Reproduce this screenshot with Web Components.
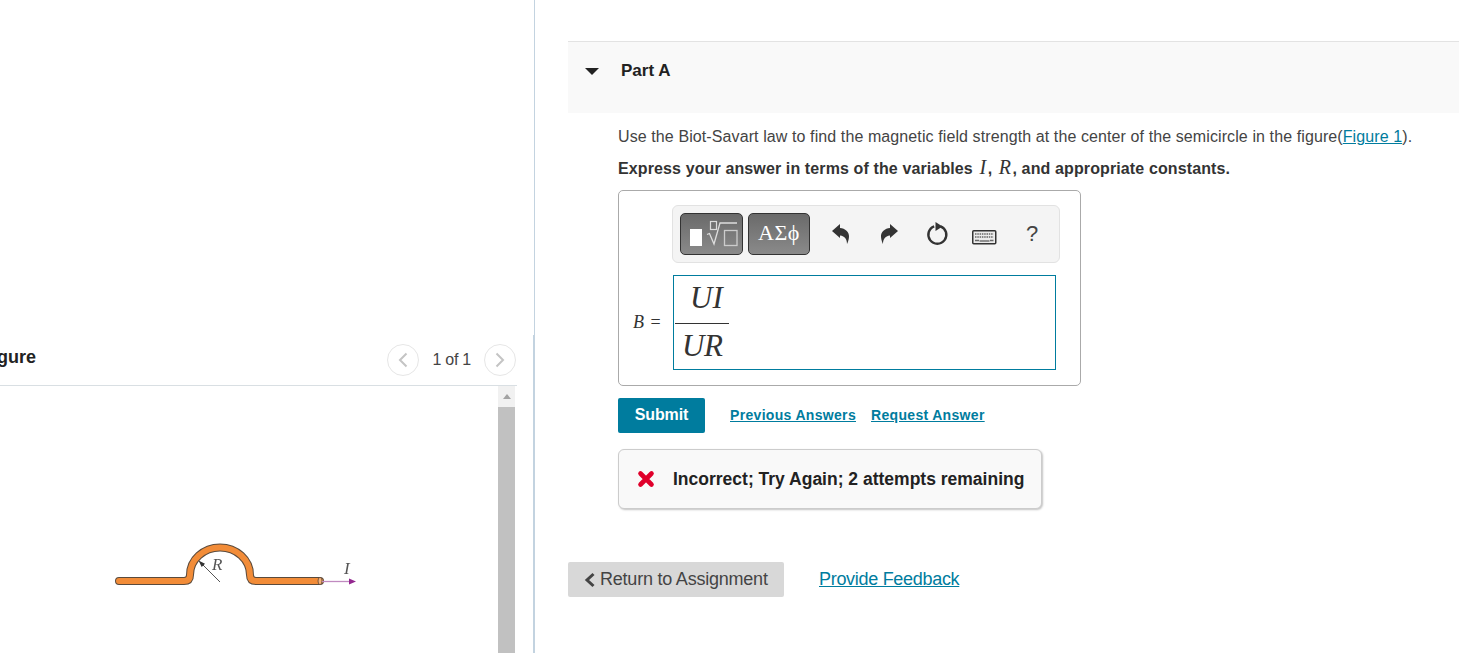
<!DOCTYPE html>
<html lang="en">
<head>
<meta charset="utf-8">
<title>Part A</title>
<style>
  html, body { margin: 0; padding: 0; height: 100%; background: #fff; overflow: hidden; }
  body { font-family: "Liberation Sans", Arial, sans-serif; color: #333; }
</style>
</head>
<body>
<item-page>
  <figure-pane slot="left"></figure-pane>
  <part-pane slot="right"></part-pane>
</item-page>

<script>
class ItemPage extends HTMLElement {
  constructor() {
    super();
    this.attachShadow({ mode: 'open' }).innerHTML = `
      <style>
        :host { display: flex; width: 1459px; height: 653px; overflow: hidden; }
        .left { flex: 0 0 534px; width: 534px; height: 653px; border-right: 1px solid #c3d3e0; overflow: hidden;
          background: linear-gradient(#c3d3e0, #c3d3e0) right bottom / 1px 318px no-repeat; }
        .right { flex: 1; min-width: 0; padding-left: 33px; }
      </style>
      <div class="left"><slot name="left"></slot></div>
      <div class="right"><slot name="right"></slot></div>
    `;
  }
}

class FigurePane extends HTMLElement {
  constructor() {
    super();
    this.attachShadow({ mode: 'open' }).innerHTML = `
      <style>
        :host { display: block; width: 517px; padding-top: 344px; }
        .head { display: flex; align-items: flex-start; height: 41px; border-bottom: 1px solid #d9dfe3; overflow: hidden; }
        h2 { margin: 0 0 0 -19px; font: bold 18px/26px "Liberation Sans", sans-serif; color: #222; flex: 1; }
        .pager { display: flex; align-items: center; gap: 13px; color: #444; font-size: 16px; margin-right: 1px; }
        .nav { width: 32px; height: 32px; box-sizing: border-box; border: 1px solid #e6e6e6; border-radius: 50%; display: flex; align-items: center; justify-content: center; }
        .pager span { letter-spacing: -.25px; }
        .body { display: flex; height: 267px; }
        .canvas { flex: 1; padding-top: 156px; padding-left: 113px; box-sizing: border-box; }
        .bar { width: 17px; margin-right: 2px; background: #f1f1f1; display: flex; flex-direction: column; }
        .arrow { height: 21px; display: flex; align-items: center; justify-content: center; }
        .arrow i { border: 4.5px solid transparent; border-top: 0; border-bottom: 5px solid #a3a3a3; }
        .thumb { flex: 1; background: #c1c1c1; }
        svg { display: block; }
        .wire { filter: blur(.3px); }
      </style>
      <div class="head">
        <h2>Figure</h2>
        <div class="pager">
          <div class="nav"><svg width="12" height="18" viewBox="0 0 12 18"><path d="M9.500 2.500 3 9l6.500 6.500" fill="none" stroke="#c4c4c4" stroke-width="2"/></svg></div>
          <span>1 of 1</span>
          <div class="nav"><svg width="12" height="18" viewBox="0 0 12 18"><path d="M2.500 2.500 9 9l-6.500 6.500" fill="none" stroke="#c4c4c4" stroke-width="2"/></svg></div>
        </div>
      </div>
      <div class="body">
        <div class="canvas">
          <svg class="wire" width="245" height="50" viewBox="0 0 245 50">
            <path d="M6 39H71Q77 39 77 33A30 27.500 0 0 1 137 33Q137 39 143 39H207" fill="none" stroke="#5a4a3c" stroke-width="8" stroke-linecap="round"/>
            <path d="M6 39H71Q77 39 77 33A30 27.500 0 0 1 137 33Q137 39 143 39H207" fill="none" stroke="#f28c38" stroke-width="6" stroke-linecap="round"/>
            <ellipse cx="207" cy="39" rx="2" ry="3.600" fill="#f6b27a" stroke="#5a4636" stroke-width=".8"/>
            <path d="M209 39.500H237" stroke="#c08ac0" stroke-width="1.300"/>
            <path d="M243 39.500l-7-3v6z" fill="#93278f"/>
            <path d="M107 40 87 20" stroke="#555" stroke-width="1"/>
            <path d="M85.500 18.500l6.500 3.200-3.300 3.200z" fill="#333"/>
            <text x="99" y="28" font-family="Liberation Serif, serif" font-style="italic" font-size="17" fill="#555">R</text>
            <text x="231" y="32" font-family="Liberation Serif, serif" font-style="italic" font-size="17" fill="#555">I</text>
          </svg>
        </div>
        <div class="bar"><div class="arrow"><i></i></div><div class="thumb"></div></div>
      </div>
    `;
  }
}

class PartPane extends HTMLElement {
  constructor() {
    super();
    this.attachShadow({ mode: 'open' }).innerHTML = `
      <style>
        :host { display: block; padding-top: 41px; font-size: 16px; color: #333; }
        .title { height: 72px; box-sizing: border-box; border-top: 1px solid #e3e3e3; background: #f9f9f9; display: flex; align-items: flex-start; padding: 20px 0 0 17px; }
        .tri { width: 0; height: 0; margin-top: 6px; border: 7px solid transparent; border-top: 7px solid #222; border-bottom: 0; }
        h3 { margin: 0 0 0 22px; font: bold 17px/18px "Liberation Sans", sans-serif; color: #222; }
        .content { padding: 14px 0 0 50px; }
        p { margin: 0; line-height: 20px; letter-spacing: .1px; color: #444; }
        a { color: #007c9e; text-decoration: underline; }
        .ask { margin-top: 10px; font-weight: bold; letter-spacing: .12px; color: #333; }
        .ask i { font: italic 20px/20px "Liberation Serif", serif; letter-spacing: 1.500px; margin-left: 2px; }
        answer-box { margin-top: 11px; }
        .actions { display: flex; align-items: center; margin-top: 12px; }
        .submit { width: 87px; height: 35px; border-radius: 2px; background: #007c9e; color: #fff; font-weight: bold; display: flex; align-items: center; justify-content: center; letter-spacing: -.1px; padding-bottom: 2px; box-sizing: border-box; }
        .actions a { font-weight: bold; font-size: 14px; margin: 0 0 2px 15px; letter-spacing: .32px; }
        .actions .first { margin-left: 25px; }
        .feedback { width: 424px; height: 60px; margin-top: 16px; box-sizing: border-box; border: 1px solid #ccc; border-radius: 6px; background: #f9f9f9; box-shadow: 1px 1px 2px #c4c4c4; display: flex; align-items: center; padding-left: 18px; font-weight: bold; color: #222; font-size: 17.500px; }
        .feedback svg { margin-right: 18px; }
        .foot { display: flex; align-items: center; margin-top: 53px; }
        .back { width: 216px; height: 35px; box-sizing: border-box; background: #d8d8d8; border-radius: 2px; display: flex; align-items: center; padding-left: 16px; font-size: 18px; color: #444; letter-spacing: -.22px; }
        .back svg { margin-right: 4px; }
        .foot a { margin-left: 35px; font-size: 18px; letter-spacing: -.3px; }
      </style>
      <div class="title"><div class="tri"></div><h3>Part A</h3></div>
      <div class="content">
        <p>Use the Biot-Savart law to find the magnetic field strength at the center of the semicircle in the figure(<a>Figure 1</a>).</p>
        <p class="ask">Express your answer in terms of the variables <i>I</i>, <i>R</i>, and appropriate constants.</p>
        <answer-box></answer-box>
        <div class="actions">
          <div class="submit">Submit</div>
          <a class="first">Previous Answers</a>
          <a>Request Answer</a>
        </div>
        <div class="feedback">
          <svg width="18" height="18" viewBox="0 0 18 18"><path d="M3.500 3.500l11 11M14.500 3.500l-11 11" stroke="#e0002b" stroke-width="4.600" stroke-linecap="round"/></svg>
          <span>Incorrect; Try Again; 2 attempts remaining</span>
        </div>
      </div>
      <div class="foot">
        <div class="back"><svg width="12" height="16" viewBox="0 0 12 16"><path d="M9.500 2 3 8l6.500 6" fill="none" stroke="#444" stroke-width="3"/></svg>Return to Assignment</div>
        <a>Provide Feedback</a>
      </div>
    `;
  }
}

class AnswerBox extends HTMLElement {
  constructor() {
    super();
    this.attachShadow({ mode: 'open' }).innerHTML = `
      <style>
        :host { display: block; width: 463px; height: 196px; box-sizing: border-box; border: 1px solid #aaa; border-radius: 5px; padding: 14px 20px 0 14px; }
        math-toolbar { margin-left: 39px; }
        .row { display: flex; align-items: center; margin-top: 12px; }
        .lhs { width: 40px; font: 18px/20px "Liberation Serif", serif; color: #333; position: relative; top: -1px; word-spacing: 2px; }
        .lhs i { font-style: italic; }
        .field { width: 383px; height: 95px; box-sizing: border-box; border: 1px solid #007c9e; padding-left: 1px; font: italic 31px/36px "Liberation Serif", serif; color: #333; }
        .frac { width: 54px; padding-top: 4px; }
        .num { height: 43px; padding-left: 15px; }
        .den { border-top: 1px solid #333; padding: 4px 0 0 7px; letter-spacing: -.5px; }
      </style>
      <math-toolbar></math-toolbar>
      <div class="row">
        <div class="lhs"><i>B</i> =</div>
        <div class="field"><div class="frac"><div class="num">UI</div><div class="den">UR</div></div></div>
      </div>
    `;
  }
}

class MathToolbar extends HTMLElement {
  constructor() {
    super();
    this.attachShadow({ mode: 'open' }).innerHTML = `
      <style>
        :host { display: flex; width: 388px; height: 58px; box-sizing: border-box; align-items: center; background: #f4f4f4; border: 1px solid #e2e2e2; border-radius: 6px; padding-left: 7px; }
        .btn { height: 42px; box-sizing: border-box; border: 1px solid #333; border-radius: 5px; background: linear-gradient(#6a6a6a, #8a8a8a); color: #fff; display: flex; align-items: center; justify-content: center; }
        .templates { width: 63px; margin-right: 5px; }
        .symbols { width: 62px; font: 22px "Liberation Serif", serif; letter-spacing: .5px; padding-bottom: 2px; }
        .tool { display: flex; justify-content: center; flex: none; }
        .help { font-size: 22px; color: #444; width: 20px; justify-content: center; }
      </style>
      <div class="btn templates">
        <svg width="61" height="40" viewBox="0 0 61 40" fill="none">
          <rect x="9" y="15" width="12" height="17" fill="#fff"/>
          <rect x="29.500" y="7.500" width="6" height="8" stroke="#ddd" stroke-width="1.200"/>
          <path d="M26 20.500l2.500-1L33 30l6-21h17" stroke="#ddd" stroke-width="1.300"/>
          <rect x="43.500" y="16.500" width="12.500" height="15" stroke="#ccc" stroke-width="1.300"/>
        </svg>
      </div>
      <div class="btn symbols">&Alpha;&Sigma;&straightphi;</div>
      <div class="tool" style="margin-left:22px"><svg width="18" height="20" viewBox="0 0 18 20"><path d="M0 7 8 0v4C13 4.300 17.500 8 17 13c-.2 3-1.500 6-2 7 0-4.500-2-8-7-8.500V14z" fill="#333"/></svg></div>
      <div class="tool" style="margin-left:30px"><svg width="18" height="20" viewBox="0 0 18 20"><path d="M18 7 10 0v4C5 4.300.5 8 1 13c.2 3 1.500 6 2 7 0-4.500 2-8 7-8.500V14z" fill="#333"/></svg></div>
      <div class="tool" style="margin-left:27px"><svg width="24" height="24" viewBox="0 0 24 24" fill="none"><path d="M9.200 4.300A9 9 0 1 0 15.500 4.300" stroke="#333" stroke-width="2.400"/><path d="M10.500 0l7 4.600-7 4.400z" fill="#333"/></svg></div>
      <div class="tool" style="margin-left:23px;margin-top:6px"><svg width="25" height="15" viewBox="0 0 25 15" fill="none"><rect x=".75" y=".75" width="23" height="13" rx="1" fill="#ececec" stroke="#333" stroke-width="1.500"/><path d="M3 4h18.500M3 7h18.500" stroke="#666" stroke-width="1.500" stroke-dasharray="1.500 .8"/><path d="M3 10.500h4M18 10.500h3.500" stroke="#666" stroke-width="1.500"/><path d="M7.500 11h10" stroke="#333" stroke-width="1"/></svg></div>
      <div class="tool help" style="margin-left:25px">?</div>
    `;
  }
}

customElements.define('math-toolbar', MathToolbar);
customElements.define('answer-box', AnswerBox);
customElements.define('part-pane', PartPane);
customElements.define('figure-pane', FigurePane);
customElements.define('item-page', ItemPage);
</script>
</body>
</html>
